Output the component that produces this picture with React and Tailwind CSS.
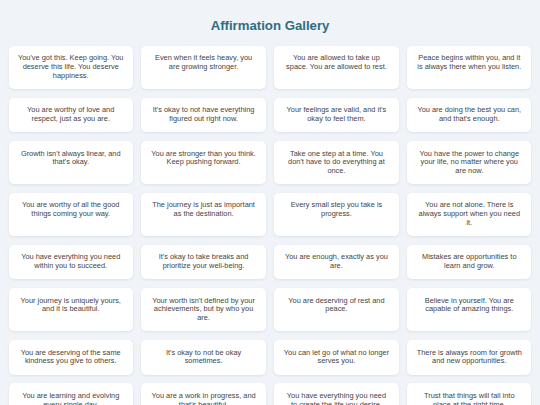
import React from "react";

const affirmations = [
  "You've got this. Keep going. You deserve this life. You deserve happiness.",
  "Even when it feels heavy, you are growing stronger.",
  "You are allowed to take up space. You are allowed to rest.",
  "Peace begins within you, and it is always there when you listen.",
  "You are worthy of love and respect, just as you are.",
  "It's okay to not have everything figured out right now.",
  "Your feelings are valid, and it's okay to feel them.",
  "You are doing the best you can, and that's enough.",
  "Growth isn't always linear, and that's okay.",
  "You are stronger than you think. Keep pushing forward.",
  "Take one step at a time. You don't have to do everything at once.",
  "You have the power to change your life, no matter where you are now.",
  "You are worthy of all the good things coming your way.",
  "The journey is just as important as the destination.",
  "Every small step you take is progress.",
  "You are not alone. There is always support when you need it.",
  "You have everything you need within you to succeed.",
  "It's okay to take breaks and prioritize your well-being.",
  "You are enough, exactly as you are.",
  "Mistakes are opportunities to learn and grow.",
  "Your journey is uniquely yours, and it is beautiful.",
  "Your worth isn't defined by your achievements, but by who you are.",
  "You are deserving of rest and peace.",
  "Believe in yourself. You are capable of amazing things.",
  "You are deserving of the same kindness you give to others.",
  "It's okay to not be okay sometimes.",
  "You can let go of what no longer serves you.",
  "There is always room for growth and new opportunities.",
  "You are learning and evolving every single day.",
  "You are a work in progress, and that's beautiful.",
  "You have everything you need to create the life you desire.",
  "Trust that things will fall into place at the right time.",
];

const AffirmationCard = ({ text }) => (
  <div className="bg-white rounded-[5px] p-[8.64px] text-center text-[#444444] text-[7.4px] leading-[8.69px] shadow-[0_1px_3px_rgba(0,0,0,0.08)]">
    {text}
  </div>
);

export default function App() {
  return (
    <div
      className="min-h-screen bg-[#f0f4f8] px-[8.6px] pt-[18px] pb-4"
      style={{ fontFamily: '"Liberation Sans", Arial, sans-serif' }}
    >
      <h1 className="text-center text-[13.2px] leading-[15px] font-bold text-[#2e6e80] mb-[12.7px]">
        Affirmation Gallery
      </h1>
      <div className="grid grid-cols-4 gap-[8.64px]">
        {affirmations.map((a, i) => (
          <AffirmationCard key={i} text={a} />
        ))}
      </div>
    </div>
  );
}
